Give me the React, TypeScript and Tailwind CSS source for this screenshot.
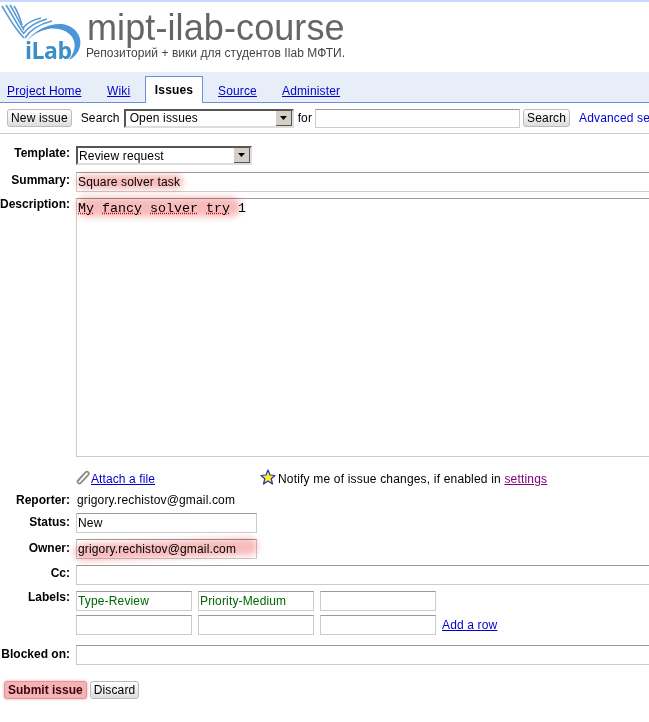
import React from 'react';

const fieldBorder = 'h-5 shrink-0 border border-[#ccc] border-t-[#999] bg-white px-[1px] text-[12px] leading-[18px] outline-none';

const Label = ({ children, className }: { children: React.ReactNode; className?: string }) => (
    <div className={`w-[70px] shrink-0 text-right text-[12px] leading-[16px] font-bold tracking-normal text-black whitespace-nowrap ${className ?? ''}`}>{children}</div>
);

const Row = ({ label, className, labelClass, children }: { label?: string; className?: string; labelClass?: string; children: React.ReactNode }) => (
    <div className={`flex items-start gap-[6px] ${className ?? ''}`}>
        <Label className={labelClass}>{label}</Label>
        {children}
    </div>
);

const Smear = ({ className }: { className: string }) => (
    <div className={`absolute rounded-full bg-[#f07878] opacity-50 mix-blend-multiply blur-[3px] pointer-events-none ${className}`} />
);

const Btn = ({ children }: { children: React.ReactNode }) => (
    <button className="h-[18px] shrink-0 rounded-[3px] border border-[#bbb] bg-gradient-to-b from-white to-[#ddd] px-[3px] text-[12px] leading-[15px] text-black whitespace-nowrap">
        {children}
    </button>
);

const SelectBox = ({ value, className }: { value: string; className: string }) => (
    <div className={`flex h-[19px] shrink-0 items-center border-2 border-[#555] border-r-[#ddd] border-b-[#ddd] bg-white text-[12px] ${className}`}>
        <span className="flex-1 pl-[1px] whitespace-nowrap">{value}</span>
        <span className="flex h-[15px] w-4 items-center justify-center border-r border-b border-[#555] bg-[#d4d0c8]">
            <svg width="7" height="4" viewBox="0 0 7 4"><path d="M0 0h7L3.500 4z" fill="#000" /></svg>
        </span>
    </div>
);

const Logo = () => (
    <div className="relative h-[66px] w-[84px] shrink-0">
        <svg width="84" height="66" viewBox="0 0 84 66" className="absolute left-[-2px] top-[-5px]">
            <g fill="none" stroke="#5a9ad4" strokeWidth="1.6">
                <path d="M2 6C8 16 14 28 24 38" />
                <path d="M6 5C12 14 17 25 24 34" />
                <path d="M10 5C15 13 19 22 24 30" />
                <path d="M14 6C18 12 20 18 22 25" />
                <path d="M25 38C30 30 40 24 52 21" />
                <path d="M24 33C29 26 36 22 47 19" />
                <path d="M23 28C27 23 32 20 41 18" />
            </g>
            <path d="M26 42C34 30 50 23 62 24C76 26 82 37 80 46C79 52 74 58 69 60C73 54 76 48 74 41C71 31 58 27 48 29C38 31 31 36 26 42Z" fill="#4a96d8" />
        </svg>
        <span className="absolute left-[23px] top-[31px] text-[23px] leading-[28px] font-bold tracking-[-0.5px] text-[#3b8ec8] font-['Open_Sans',sans-serif]">iLab</span>
    </div>
);

const Tab = ({ children, className }: { children: React.ReactNode; className: string }) => (
    <div className={`flex h-[21px] items-center ${className}`}>
        <a className="pb-[1px] text-[12px] text-[#0000cc] underline whitespace-nowrap">{children}</a>
    </div>
);

export default function App() {
    return (
        <div className="relative h-[722px] w-[649px] overflow-hidden bg-white font-['Liberation_Sans',Arial,sans-serif] text-black tracking-[0.15px]">
            <div className="h-[2px] bg-[#c3d9ff]" />

            {/* Header */}
            <div className="flex h-[70px] pl-[2px] pt-[3px]">
                <Logo />
                <div className="ml-[1px] flex flex-col">
                    <div className="mt-[5px] text-[36px] leading-[36px] tracking-[0.1px] text-[#666] whitespace-nowrap">mipt-ilab-course</div>
                    <div className="ml-[-1px] text-[12px] leading-[14px] tracking-[0.05px] text-[#444] whitespace-nowrap">Репозиторий + вики для студентов Ilab МФТИ.</div>
                </div>
            </div>

            {/* Tabs */}
            <div className="flex h-[31px] items-end border-b border-[#6b90da] bg-[#e8eef8] pl-[7px]">
                <Tab className="w-[100px]">Project Home</Tab>
                <Tab className="w-[38px]">Wiki</Tab>
                <div className="mb-[-1px] flex h-[27px] w-[58px] items-center justify-center border border-b-0 border-[#6b90da] bg-white text-[12px] font-bold text-black">Issues</div>
                <Tab className="ml-[15px] w-[64px]">Source</Tab>
                <Tab className="">Administer</Tab>
            </div>

            {/* Search bar */}
            <div className="flex h-[31px] items-center border-b border-[#ccc] pl-[7px] text-[12px] whitespace-nowrap">
                <Btn>New issue</Btn>
                <span className="ml-[9px]">Search</span>
                <SelectBox value="Open issues" className="ml-[4px] w-[170px] pl-[3px]" />
                <span className="ml-[4px]">for</span>
                <div className={`${fieldBorder} ml-[3px] h-[19px] w-[205px]`} />
                <div className="ml-[3px] shrink-0"><Btn>Search</Btn></div>
                <a className="ml-[9px] text-[#0000cc]">Advanced search</a>
            </div>

            {/* Form */}
            <div className="relative w-[720px] pt-[12px]">
                <Row label="Template:" labelClass="mt-[-1px]">
                    <SelectBox value="Review request" className="w-[176px]" />
                </Row>
                <Row label="Summary:" className="mt-[7px]">
                    <div className={`${fieldBorder} flex-1`}>Square solver task</div>
                </Row>
                <Row label="Description:" className="mt-[6px]" labelClass="mt-[-2px]">
                    <div className="h-[259px] flex-1 border border-[#ccc] border-t-[#999] px-[1px] pt-[2px] font-['Liberation_Mono',monospace] text-[13.33px] leading-[16px] tracking-normal whitespace-pre">
                        <span className="underline decoration-dotted decoration-[#d00]">My</span> <span className="underline decoration-dotted decoration-[#d00]">fancy</span> <span className="underline decoration-dotted decoration-[#d00]">solver</span> <span className="underline decoration-dotted decoration-[#d00]">try</span> 1
                    </div>
                </Row>

                {/* Attach and notify */}
                <div className="mt-[12px] flex h-[19px] items-center pl-[75px] text-[12px] whitespace-nowrap">
                    <svg width="17" height="17" viewBox="0 0 16 16" fill="none" stroke="#888" strokeWidth="1.600" strokeLinecap="round" className="mt-[-3px]">
                        <path d="M3 11L10 3C11.500 1.500 14 3.500 12.500 5.500L5.500 13C4 14.500 1.500 13 2.500 11L8 5" />
                    </svg>
                    <a className="ml-[-1px] mt-[1px] text-[#0000cc] tracking-[0.1px] underline">Attach a file</a>
                    <svg width="16" height="16" viewBox="0 0 16 16" className="ml-[105px] mt-[-4px]">
                        <path d="M8 1L10 6L15 6.500L11.200 9.700L12.500 15L8 12.100L3.500 15L4.800 9.700L1 6.500L6 6Z" fill="#ffee22" stroke="#2233aa" strokeWidth="1.200" strokeLinejoin="round" />
                    </svg>
                    <span className="ml-[2px] mt-[1px] tracking-[0.18px]">Notify me of issue changes, if enabled in <a className="text-[#800080] underline">settings</a></span>
                </div>

                <Row label="Reporter:" className="mt-[4px]">
                    <div className="ml-[1px] text-[12px] leading-[16px]">grigory.rechistov@gmail.com</div>
                </Row>
                <Row label="Status:" className="mt-[5px]" labelClass="mt-[1px]">
                    <div className={`${fieldBorder} w-[181px]`}>New</div>
                </Row>
                <Row label="Owner:" className="mt-[6px]" labelClass="mt-[1px]">
                    <div className={`${fieldBorder} w-[181px]`}>grigory.rechistov@gmail.com</div>
                </Row>
                <Row label="Cc:" className="mt-[6px]">
                    <div className={`${fieldBorder} flex-1`} />
                </Row>
                <Row label="Labels:" className="mt-[6px]" labelClass="mt-[-2px]">
                    <div className="flex flex-col gap-1">
                        <div className="flex gap-[6px] text-[#006600]">
                            <div className={`${fieldBorder} w-[116px]`}>Type-Review</div>
                            <div className={`${fieldBorder} w-[116px]`}>Priority-Medium</div>
                            <div className={`${fieldBorder} w-[116px]`} />
                        </div>
                        <div className="flex items-center gap-[6px]">
                            <div className={`${fieldBorder} w-[116px]`} />
                            <div className={`${fieldBorder} w-[116px]`} />
                            <div className={`${fieldBorder} w-[116px]`} />
                            <a className="text-[12px] text-[#0000cc] underline whitespace-nowrap">Add a row</a>
                        </div>
                    </div>
                </Row>
                <Row label="Blocked on:" className="mt-[10px]" labelClass="mt-[1px]">
                    <div className={`${fieldBorder} flex-1`} />
                </Row>

                <div className="mt-[16px] flex gap-[3px] pl-[4px]">
                    <button className="h-[18px] rounded-[3px] border border-[#d99] bg-[#f4b4b4] px-[3px] text-[12px] leading-[15px] font-bold tracking-normal text-[#400010] shadow-[0_0_3px_#f4a0a0] whitespace-nowrap">Submit issue</button>
                    <Btn>Discard</Btn>
                </div>
            </div>

            {/* Hand-drawn highlights on top of the form */}
            <Smear className="left-[77px] top-[175px] h-[14px] w-[106px]" />
            <Smear className="left-[76px] top-[197px] h-[20px] w-[165px]" />
            <Smear className="left-[74px] top-[541px] h-[17px] w-[184px] -rotate-2" />
        </div>
    );
}
